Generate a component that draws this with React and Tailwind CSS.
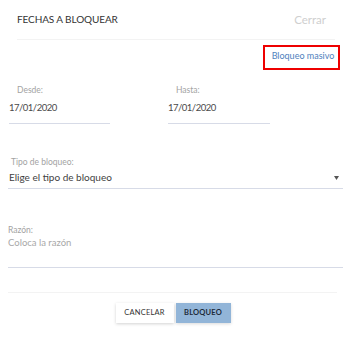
import React from 'react';

const FONT = { fontFamily: 'Lato, "Open Sans", sans-serif' };

const Label = ({ children, className = '' }) => (
  <p className={`text-[8.5px] leading-[10px] text-[#a3a3a3] ${className}`}>{children}</p>
);

export default function App() {
  return (
    <div className="w-[347px] h-[338px] bg-white" style={FONT}>
      <div className="ml-[17px] mr-[12px] h-[40px] border-b border-[#f3f3f3] flex items-center justify-between">
        <h2 className="text-[10px] tracking-[-0.1px] text-[#333]">FECHAS A BLOQUEAR</h2>
        <button className="pr-[9px] text-[11.5px] text-[#cfcfcf]">Cerrar</button>
      </div>

      <div className="pt-[5px] pr-[7px] flex justify-end">
        <a className="h-[25px] w-[77px] border-2 border-[#ee0000] flex items-center justify-center pl-[3px] pb-[3px] text-[9px] text-[#4f7fbd]">
          Bloqueo masivo
        </a>
      </div>

      <div className="mt-[15px] flex gap-[58px] pl-[9px]">
        <div className="w-[101px]">
          <Label className="pl-[8px]">Desde:</Label>
          <div className="h-[29px] pb-[2px] flex items-center border-b border-[#d7dbe7] text-[9.5px] tracking-[-0.5px] text-[#4a4a4a]">17/01/2020</div>
        </div>
        <div className="w-[102px]">
          <Label className="pl-[8px]">Hasta:</Label>
          <div className="h-[29px] pb-[2px] flex items-center border-b border-[#d7dbe7] text-[9.5px] tracking-[-0.5px] text-[#4a4a4a]">17/01/2020</div>
        </div>
      </div>

      <div className="mt-[33px] ml-[8px] mr-[4px]">
        <Label className="pl-[3px]">Tipo de bloqueo:</Label>
        <div className="h-[22px] flex items-center justify-between pl-[1px] pr-[4px] border-b border-[#d7dbe7]">
          <span className="text-[10px] text-[#3f3f3f]">Elige el tipo de bloqueo</span>
          <svg width="5" height="4" viewBox="0 0 5 4" className="mt-[1px]">
            <path d="M0 0H5L2.5 4Z" fill="#555" />
          </svg>
        </div>
      </div>

      <div className="mt-[36px] ml-[8px] mr-[4px]">
        <Label>Razón:</Label>
        <div className="h-[33px] pt-[2px] border-b border-[#d7dbe7] text-[9.5px] leading-[12px] text-[#a8a8a8]">
          Coloca la razón
        </div>
      </div>

      <div className="mt-[24px] mx-[8px] mr-[10px] border-t border-[#f3f3f3] pt-[10px] flex justify-center gap-[2px] pl-[1px]">
        <button className="h-[20px] w-[58px] bg-white shadow-[0_1px_3px_rgba(0,0,0,0.18)] text-[7.5px] text-[#333] tracking-[0.2px]">
          CANCELAR
        </button>
        <button className="h-[20px] w-[55px] bg-[#92b5d8] shadow-[0_1px_3px_rgba(0,0,0,0.15)] text-[7.5px] font-bold text-[#1d2b3a] tracking-[0.2px]">
          BLOQUEO
        </button>
      </div>
    </div>
  );
}
